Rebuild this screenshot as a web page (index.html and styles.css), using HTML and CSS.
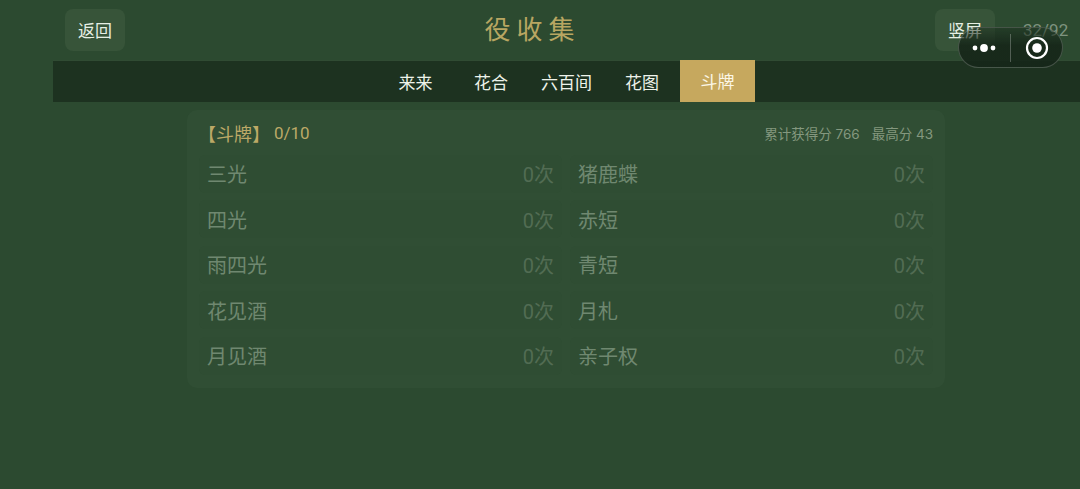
FILE: index.html
```html
<!DOCTYPE html>
<html lang="zh-CN">
<head>
  <meta charset="UTF-8">
  <title>役收集</title>
  <link rel="stylesheet" href="styles.css">
</head>
<body>
  <div class="page">
    <header class="topbar">
      <button class="btn">返回</button>
      <h1 class="title">役收集</h1>
      <div class="topbar-right">
        <button class="btn">竖屏</button>
        <span class="count">32/92</span>
      </div>
    </header>

    <nav class="tabs">
      <a class="tab">来来</a>
      <a class="tab">花合</a>
      <a class="tab">六百间</a>
      <a class="tab">花图</a>
      <a class="tab active">斗牌</a>
    </nav>

    <section class="card">
      <div class="card-head">
        <div class="card-title"><span>【斗牌】</span><span class="card-count">0/10</span></div>
        <div class="stats"><span>累计获得分 766</span><span>最高分 43</span></div>
      </div>
      <div class="grid">
        <div class="cell"><span>三光</span><span class="times">0次</span></div>
        <div class="cell"><span>猪鹿蝶</span><span class="times">0次</span></div>
        <div class="cell"><span>四光</span><span class="times">0次</span></div>
        <div class="cell"><span>赤短</span><span class="times">0次</span></div>
        <div class="cell"><span>雨四光</span><span class="times">0次</span></div>
        <div class="cell"><span>青短</span><span class="times">0次</span></div>
        <div class="cell"><span>花见酒</span><span class="times">0次</span></div>
        <div class="cell"><span>月札</span><span class="times">0次</span></div>
        <div class="cell"><span>月见酒</span><span class="times">0次</span></div>
        <div class="cell"><span>亲子权</span><span class="times">0次</span></div>
      </div>
    </section>
  </div>

  <div class="capsule">
    <svg class="capsule-more" width="24" height="10" viewBox="0 0 24 10">
      <circle cx="3" cy="5" r="2.4" fill="#fff"/>
      <circle cx="12" cy="5" r="3.9" fill="#fff"/>
      <circle cx="21" cy="5" r="2.4" fill="#fff"/>
    </svg>
    <span class="capsule-line"></span>
    <svg class="capsule-close" width="24" height="24" viewBox="0 0 24 24">
      <circle cx="12" cy="12" r="10" fill="none" stroke="#fff" stroke-width="2.2"/>
      <circle cx="12" cy="12" r="4.8" fill="#fff"/>
    </svg>
  </div>
</body>
</html>
```

FILE: styles.css
```css
* {
  box-sizing: border-box;
}
html, body {
  margin: 0;
  height: 100%;
}
body {
  background: #2c4a30;
  font-family: Roboto, "Noto Sans CJK SC", sans-serif;
  overflow: hidden;
  position: relative;
}
.page {
  margin-left: 53px;
}
.topbar {
  height: 60px;
  padding: 9px 12px 0;
  display: flex;
  justify-content: space-between;
  align-items: flex-start;
  position: relative;
}
.btn {
  width: 60px;
  height: 42px;
  border: none;
  border-radius: 8px;
  background: #375439;
  color: #e6efe4;
  font-family: inherit;
  font-size: 17px;
  padding: 0 0 2px;
}
.title {
  position: absolute;
  left: 0;
  right: 0;
  top: 11px;
  margin: 0 0 0 -68px;
  text-align: center;
  color: #b8a662;
  font-size: 26px;
  font-weight: 400;
  letter-spacing: 6px;
  line-height: 38px;
}
.topbar-right {
  display: flex;
  align-items: flex-start;
  gap: 28px;
}
.count {
  color: #7e937f;
  font-size: 17px;
  line-height: 42px;
  width: 45px;
  white-space: nowrap;
}
.tabs {
  height: 42px;
  background: #1d3220;
  border-top: 1px solid #304b33;
  display: flex;
  justify-content: center;
}
.tab {
  width: 75.5px;
  padding-bottom: 1px;
  display: flex;
  align-items: center;
  justify-content: center;
  color: #eef3ea;
  font-size: 17px;
}
.tab.active {
  background: #c6a85e;
  margin-top: -1px;
  color: #fbf6e6;
}
.card {
  width: 758px;
  height: 278px;
  margin: 8px 0 0 134px;
  padding: 0 12px;
  background: #304e34;
  border-radius: 10px;
}
.card-head {
  height: 44.5px;
  padding: 1px 0 0;
  display: flex;
  justify-content: space-between;
  align-items: center;
}
.card-title {
  color: #bca967;
  font-size: 18px;
  display: flex;
  align-items: center;
  gap: 4px;
  margin-left: -1px;
}
.card-count {
  font-size: 17px;
}
.stats {
  display: flex;
  gap: 12px;
  color: #84987f;
  font-family: Inter, "Noto Sans CJK SC", sans-serif;
  font-size: 13.5px;
}
.grid {
  display: grid;
  grid-template-columns: 1fr 1fr;
  column-gap: 8px;
  row-gap: 7.6px;
}
.cell {
  height: 38px;
  padding: 0 8px;
  border-radius: 6px;
  background: #2f4d33;
  display: flex;
  justify-content: space-between;
  align-items: center;
  color: #6f8870;
  font-size: 20px;
}
.times {
  color: #526c53;
}
/* wechat capsule, fades out at the top so the buttons behind still show */
.capsule {
  position: absolute;
  left: 958px;
  top: 27px;
  width: 105px;
  height: 41px;
  border-radius: 21px;
  background: linear-gradient(rgba(22, 38, 25, 0.35), rgba(22, 38, 25, 0.9) 45%);
  border: 1px solid rgba(255, 255, 255, 0.2);
  display: flex;
  align-items: center;
}
.capsule-more {
  margin-left: 13px;
}
.capsule-line {
  width: 1px;
  height: 28px;
  margin-left: 14px;
  background: rgba(255, 255, 255, 0.25);
}
.capsule-close {
  margin-left: 14px;
}
```
